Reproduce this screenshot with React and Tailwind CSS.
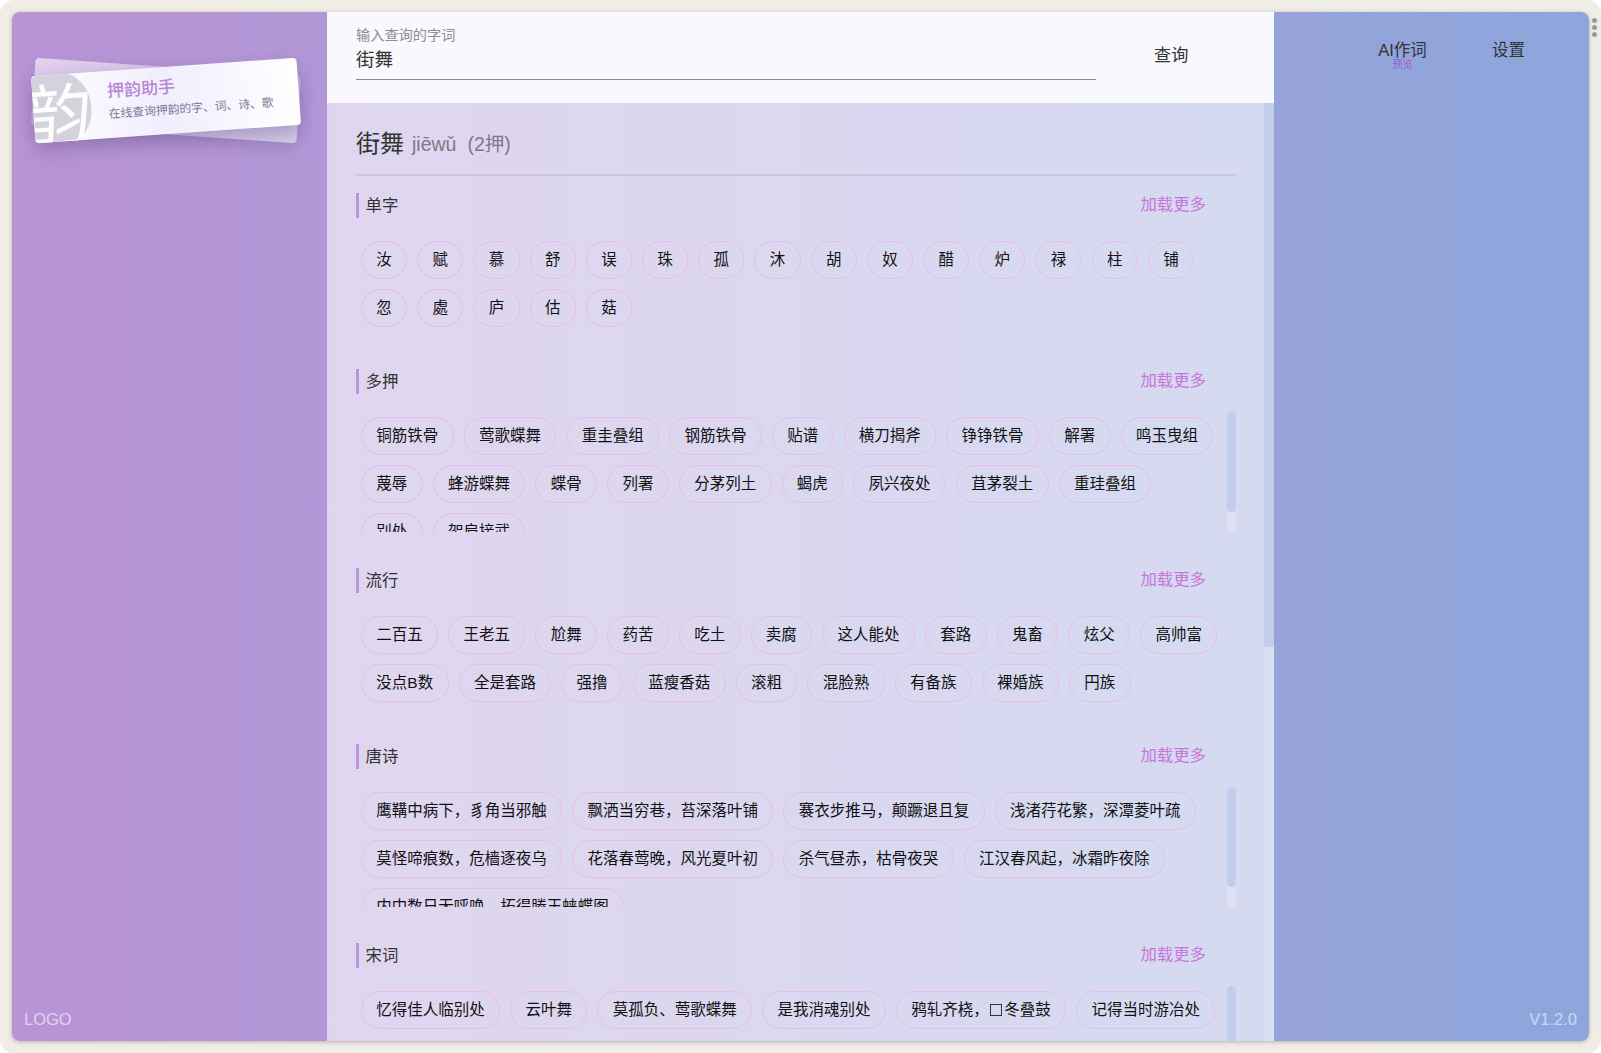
import React from "react";

const sections = [
  { title: "单字", h: "h-[97px]", chips: "汝 赋 慕 舒 误 珠 孤 沐 胡 奴 醋 炉 禄 柱 铺 忽 處 庐 估 菇".split(" ") },
  { title: "多押", h: "h-[120px]", bar: true, chips: "铜筋铁骨 莺歌蝶舞 重圭叠组 钢筋铁骨 贴谱 横刀揭斧 铮铮铁骨 解署 鸣玉曳组 蔑辱 蜂游蝶舞 蝶骨 列署 分茅列土 蝎虎 夙兴夜处 苴茅裂土 重珪叠组 别处 架肩接武".split(" ") },
  { title: "流行", h: "h-[97px]", chips: "二百五 王老五 尬舞 药苦 吃土 卖腐 这人能处 套路 鬼畜 炫父 高帅富 没点B数 全是套路 强撸 蓝瘦香菇 滚粗 混脸熟 有备族 裸婚族 円族".split(" ") },
  { title: "唐诗", h: "h-[120px]", bar: true, chips: "鹰鞲中病下，豸角当邪触 飘洒当穷巷，苔深落叶铺 褰衣步推马，颠蹶退且复 浅渚荇花繁，深潭菱叶疏 莫怪啼痕数，危樯逐夜乌 花落春莺晚，风光夏叶初 杀气昼赤，枯骨夜哭 江汉春风起，冰霜昨夜除 内中数日无呼唤，拓得滕王蛱蝶图".split(" ") },
  { title: "宋词", h: "h-[120px]", bar: true, chips: "忆得佳人临别处 云叶舞 莫孤负、莺歌蝶舞 是我消魂别处 鸦轧齐桡，□冬叠鼓 记得当时游冶处".split(" ") },
];

function Chip({ children }) {
  const text = String(children);
  const parts = text.split("□");
  return (
    <span className="m-[5px] flex h-[38px] items-center rounded-[19px] border border-[#eabde6] px-[14.35px] text-[15.5px] leading-none whitespace-nowrap text-[#111]">
      {parts.length > 1 ? (
        <>
          {parts[0]}
          <span className="inline-block w-[15.5px] text-center font-['Noto_Sans_CJK_SC'] text-[15.5px]">
            <span className="inline-block h-[12px] w-[12px] border border-[#333] align-[0px]" aria-label="□" />
          </span>
          {parts[1]}
        </>
      ) : (
        text
      )}
    </span>
  );
}

function Section({ s }) {
  return (
    <section className="mb-[36px]">
      <div className="mb-[18px] flex h-[25px] items-center justify-between pr-[30px]">
        <h3 className="border-l-[3.5px] border-[#bb93dc] pl-[6.5px] text-[16.4px] leading-[25px] font-normal text-[#333]">{s.title}</h3>
        <button className="-mt-[2px] text-[16.4px] leading-none text-[#c576d8]">加载更多</button>
      </div>
      <div className={`relative overflow-hidden ${s.h}`}>
        <div className="flex w-[869px] flex-wrap content-start">
          {s.chips.map((c, i) => (
            <Chip key={c + i}>{c}</Chip>
          ))}
        </div>
        {s.bar && (
          <div className="absolute top-0 right-[0px] h-[120px] w-[9px] rounded-[3px] bg-white/20">
            <div className="h-[100px] w-[9px] rounded-[4px] bg-[#c1cdea]" />
          </div>
        )}
      </div>
    </section>
  );
}

function Logo() {
  return (
    <div className="relative ml-[21px] mt-[55px] h-[67px] w-[266px]">
      <div className="absolute inset-0 rotate-[4deg] rounded-[4px] bg-linear-to-br from-white/60 via-white/25 to-[#dcdcee]/80 shadow-[0_6px_14px_rgba(80,60,120,0.15)]" />
      <div className="absolute inset-0 -rotate-[4deg] overflow-hidden rounded-[4px] bg-linear-to-r from-white via-[#f0eefc] to-white shadow-[0_8px_18px_rgba(70,50,110,0.28)]">
        <div className="absolute -left-[16px] -top-[4px] flex h-[78px] w-[74px] items-start justify-center overflow-hidden rounded-full bg-[#d4d2dc]">
          <span className="mt-[12px] ml-[6px] -skew-x-6 text-[68px] leading-none font-normal text-white/95">韵</span>
        </div>
        <div className="absolute left-[75px] top-[9px]">
          <div className="text-[17px] leading-[24px] font-medium text-[#b786d6]">押韵助手</div>
          <div className="mt-[2px] text-[11.8px] leading-[16px] whitespace-nowrap text-[#7b7b9a]">在线查询押韵的字、词、诗、歌</div>
        </div>
      </div>
    </div>
  );
}

export default function App() {
  return (
    <div
      className="relative h-[1053px] w-[1601px] overflow-hidden rounded-[14px] bg-[#f0ece6] p-[12px]"
      style={{ fontFamily: '"Liberation Sans","Noto Sans CJK SC",sans-serif' }}
    >
      <div className="flex h-[1029px] w-[1577px] overflow-hidden rounded-[8px] bg-linear-to-r from-[#b993d6] to-[#8ca6db] shadow-[0_1px_4px_rgba(0,0,0,0.25)]">
        <aside className="flex w-[315px] shrink-0 flex-col justify-between">
          <Logo />
          <div className="pb-[13px] pl-[12px] text-[16.5px] leading-[18px] text-white/60">LOGO</div>
        </aside>

        <main className="relative flex w-[947px] shrink-0 flex-col overflow-hidden">
          <header className="flex h-[91px] shrink-0 items-start bg-[#f8f8fd] pl-[29px]">
            <div className="h-[68px] w-[740px] border-b border-[#8c8c94] pt-[14px]">
              <div className="text-[14.2px] leading-[18px] text-[#8d8c98]">输入查询的字词</div>
              <div className="mt-[3px] text-[18.6px] leading-[26px] text-[#333]">街舞</div>
            </div>
            <button className="ml-[58px] mt-[31px] text-[17.2px] leading-[24px] text-[#333]">查询</button>
          </header>
          <div className="relative flex-1 overflow-hidden bg-white/60 pl-[29px]">
            <div className="w-[880px]">
              <div className="mb-[17px] flex h-[73px] items-center border-b-2 border-[#c9c5dd] pt-[10px] text-[#7b7a86]">
                <span className="text-[24px] leading-none text-[#333]">街舞</span>
                <span className="ml-[8px] mt-[3px] text-[19.5px] leading-none">jiēwǔ</span>
                <span className="ml-[11px] mt-[3px] text-[19.5px] leading-none">(2押)</span>
              </div>
              {sections.map((s) => (
                <Section key={s.title} s={s} />
              ))}
            </div>
            <div className="absolute top-0 right-0 h-full w-[10px] bg-white/10">
              <div className="h-[544px] w-[10px] rounded-[3px] bg-[#c1cdea]" />
            </div>
          </div>
        </main>

        <aside className="flex w-[315px] shrink-0 flex-col justify-between">
          <nav className="flex items-start pt-[28px] text-[16.5px] text-[#333]">
            <div className="ml-[104px] flex w-[49px] flex-col items-center">
              <span className="leading-[20px] whitespace-nowrap">AI作词</span>
              <span className="-mt-[1px] bg-linear-to-r from-[#8a55d6] to-[#c94fc0] bg-clip-text text-[10px] leading-[12px] text-transparent">预览</span>
            </div>
            <span className="ml-[65px] leading-[20px]">设置</span>
          </nav>
          <div className="pb-[13px] pr-[12px] text-right text-[16.5px] leading-[18px] text-white/55">V1.2.0</div>
        </aside>
      </div>

      <div className="absolute top-[18px] right-[4px] flex flex-col gap-[2px]">
        <span className="h-[5px] w-[5px] rounded-full bg-[#9a9a9a]" />
        <span className="h-[5px] w-[5px] rounded-full bg-[#9a9a9a]" />
        <span className="h-[5px] w-[5px] rounded-full bg-[#9a9a9a]" />
      </div>
    </div>
  );
}
